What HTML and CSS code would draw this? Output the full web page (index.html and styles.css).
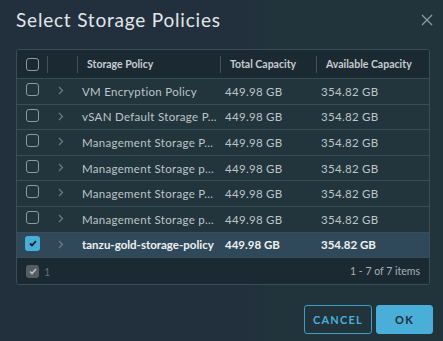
FILE: index.html
```html
<!DOCTYPE html>
<html>
<head>
<meta charset="utf-8">
<link rel="stylesheet" href="styles.css">
</head>
<body>
<div class="dialog">
  <div class="head">
    <h1 class="title">Select Storage Policies</h1>
    <svg class="close" width="12" height="12" viewBox="0 0 12 12"><path d="M1 1L11 11M11 1L1 11" stroke="#8d9ca4" stroke-width="1.3" fill="none"/></svg>
  </div>
  <div class="grid">
    <div class="row hdr">
      <div class="cell c-sel"><span class="cb"></span></div>
      <div class="cell c-exp sep"></div>
      <div class="cell c-name sep">Storage Policy</div>
      <div class="cell c-num sep">Total Capacity</div>
      <div class="cell c-num sep">Available Capacity</div>
    </div>
    <div class="row">
      <div class="cell c-sel"><span class="cb"></span></div>
      <div class="cell c-exp"><svg class="chev" width="6" height="9" viewBox="0 0 6 9"><path d="M1 1L4.5 4.5L1 8" stroke="#6c7c85" stroke-width="1.2" fill="none"/></svg></div>
      <div class="cell c-name">VM Encryption Policy</div>
      <div class="cell c-num">449.98 GB</div>
      <div class="cell c-num">354.82 GB</div>
    </div>
    <div class="row">
      <div class="cell c-sel"><span class="cb"></span></div>
      <div class="cell c-exp"><svg class="chev" width="6" height="9" viewBox="0 0 6 9"><path d="M1 1L4.5 4.5L1 8" stroke="#6c7c85" stroke-width="1.2" fill="none"/></svg></div>
      <div class="cell c-name">vSAN Default Storage P...</div>
      <div class="cell c-num">449.98 GB</div>
      <div class="cell c-num">354.82 GB</div>
    </div>
    <div class="row">
      <div class="cell c-sel"><span class="cb"></span></div>
      <div class="cell c-exp"><svg class="chev" width="6" height="9" viewBox="0 0 6 9"><path d="M1 1L4.5 4.5L1 8" stroke="#6c7c85" stroke-width="1.2" fill="none"/></svg></div>
      <div class="cell c-name">Management Storage P...</div>
      <div class="cell c-num">449.98 GB</div>
      <div class="cell c-num">354.82 GB</div>
    </div>
    <div class="row">
      <div class="cell c-sel"><span class="cb"></span></div>
      <div class="cell c-exp"><svg class="chev" width="6" height="9" viewBox="0 0 6 9"><path d="M1 1L4.5 4.5L1 8" stroke="#6c7c85" stroke-width="1.2" fill="none"/></svg></div>
      <div class="cell c-name">Management Storage p...</div>
      <div class="cell c-num">449.98 GB</div>
      <div class="cell c-num">354.82 GB</div>
    </div>
    <div class="row">
      <div class="cell c-sel"><span class="cb"></span></div>
      <div class="cell c-exp"><svg class="chev" width="6" height="9" viewBox="0 0 6 9"><path d="M1 1L4.5 4.5L1 8" stroke="#6c7c85" stroke-width="1.2" fill="none"/></svg></div>
      <div class="cell c-name">Management Storage P...</div>
      <div class="cell c-num">449.98 GB</div>
      <div class="cell c-num">354.82 GB</div>
    </div>
    <div class="row">
      <div class="cell c-sel"><span class="cb"></span></div>
      <div class="cell c-exp"><svg class="chev" width="6" height="9" viewBox="0 0 6 9"><path d="M1 1L4.5 4.5L1 8" stroke="#6c7c85" stroke-width="1.2" fill="none"/></svg></div>
      <div class="cell c-name">Management Storage p...</div>
      <div class="cell c-num">449.98 GB</div>
      <div class="cell c-num">354.82 GB</div>
    </div>
    <div class="row selected">
      <div class="cell c-sel"><span class="cb on"><svg width="8" height="7" viewBox="0 0 8 7"><path d="M1 3.5L3 5.5L7 1" stroke="#0d1c24" stroke-width="1.8" fill="none"/></svg></span></div>
      <div class="cell c-exp"><svg class="chev" width="6" height="9" viewBox="0 0 6 9"><path d="M1 1L4.5 4.5L1 8" stroke="#6c7c85" stroke-width="1.2" fill="none"/></svg></div>
      <div class="cell c-name">tanzu-gold-storage-policy</div>
      <div class="cell c-num">449.98 GB</div>
      <div class="cell c-num">354.82 GB</div>
    </div>
    <div class="foot">
      <div class="foot-left"><span class="cb grey"><svg width="8" height="7" viewBox="0 0 8 7"><path d="M1 3.5L3 5.5L7 1" stroke="#b9c0c3" stroke-width="1.6" fill="none"/></svg></span><span class="count">1</span></div>
      <div class="pager">1 - 7 of 7 items</div>
    </div>
  </div>
  <div class="actions">
    <button class="btn outline">CANCEL</button>
    <button class="btn primary">OK</button>
  </div>
</div>
</body>
</html>
```

FILE: styles.css
```css
html, body {
  margin: 0;
  padding: 0;
  width: 443px;
  height: 341px;
  overflow: hidden;
  background: #21323b;
  font-family: Lato, "Open Sans", sans-serif;
}
.dialog {
  height: 341px;
  padding: 0 10px 0 16px;
  box-sizing: border-box;
  background: linear-gradient(to right, #22303d 0, #22303d 250px, #21333b 270px);
}
.head {
  display: flex;
  justify-content: space-between;
  align-items: flex-start;
  height: 49px;
}
.title {
  margin: 0;
  padding-top: 8px;
  font-size: 19px;
  line-height: 24px;
  font-weight: 400;
  color: #e2e7e9;
  letter-spacing: 0.8px;
}
.close {
  margin-top: 14px;
  margin-right: 0;
}
.grid {
  width: 414px;
  box-sizing: border-box;
  border: 1px solid #3b4e58;
  border-radius: 3px;
  background: #21333b;
  overflow: hidden;
}
.row {
  display: grid;
  grid-template-columns: 30px 30px 143px 96px 113px;
  height: 25.6px;
  box-sizing: border-box;
  border-bottom: 1px solid #3a4d57;
  font-size: 11.5px;
  letter-spacing: 0.3px;
  color: #bec5c9;
  background: rgba(35, 53, 62, 0.6);
}
.row.hdr {
  height: 29px;
  background: #1b2932;
  font-size: 10.5px;
  font-weight: 700;
  letter-spacing: 0;
  color: #c7cdd0;
}
.cell {
  display: flex;
  align-items: center;
  padding-left: 5px;
  position: relative;
  white-space: nowrap;
}
.hdr .cell { padding-left: 10px; }
.hdr .cell.sep::before {
  content: "";
  position: absolute;
  left: 0;
  top: 6px;
  bottom: 5px;
  width: 1px;
  background: #3f525c;
}
.c-sel { padding-left: 9px !important; align-items: flex-start; padding-top: 4px; }
.hdr .c-sel { padding-top: 8px; }
.c-exp { justify-content: flex-start; padding-left: 11px; align-items: flex-start; padding-top: 7px; }
.cb {
  display: inline-flex;
  align-items: center;
  justify-content: center;
  width: 13px;
  height: 13px;
  box-sizing: border-box;
  border: 1px solid #8e9aa1;
  border-radius: 3px;
}
.cb.on {
  width: 15px;
  height: 15px;
  margin-left: -1px;
  margin-top: -1px;
  border: none;
  background: #49afd9;
}
.row.selected {
  background: #30495a;
  color: #eef1f2;
  font-weight: 700;
  letter-spacing: 0;
}
.foot {
  height: 26px;
  display: flex;
  align-items: center;
  justify-content: space-between;
  background: #1b2932;
  padding: 0 9px 0 9px;
}
.foot-left { display: flex; align-items: center; }
.cb.grey {
  border: none;
  background: #535d62;
}
.count {
  margin-left: 5px;
  font-size: 11px;
  color: #5f6e76;
}
.pager {
  font-size: 10.5px;
  color: #a7b1b6;
}
.actions {
  display: flex;
  justify-content: flex-end;
  gap: 4px;
  margin-top: 20px;
  width: 417px;
}
.btn {
  height: 29px;
  box-sizing: border-box;
  border-radius: 3px;
  font-family: Lato, "Open Sans", sans-serif;
  font-size: 11px;
  font-weight: 700;
  letter-spacing: 1.2px;
  padding: 0;
}
.btn.outline {
  width: 68px;
  background: transparent;
  border: 1px solid #3e9dc6;
  color: #49afd9;
}
.btn.primary {
  width: 57px;
  background: #49afd9;
  border: 1px solid #49afd9;
  color: #1c2d37;
}
```
